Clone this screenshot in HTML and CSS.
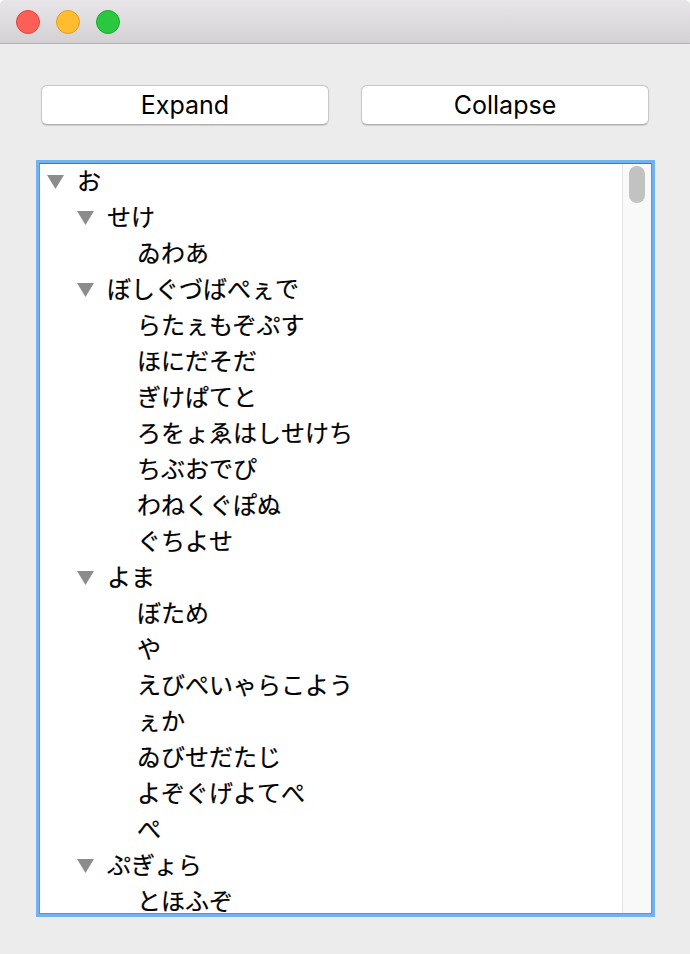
FILE: index.html
```html
<!DOCTYPE html>
<html lang="ja">
<head>
<meta charset="utf-8">
<title>Outline</title>
<link rel="stylesheet" href="styles.css">
</head>
<body>
<div class="window">
  <div class="titlebar">
    <span class="light red"></span>
    <span class="light yellow"></span>
    <span class="light green"></span>
  </div>
  <div class="content">
    <div class="buttons">
      <button class="btn">Expand</button>
      <button class="btn">Collapse</button>
    </div>
    <div class="tree">
      <ul class="list">
        <li class="row l0"><svg class="tri" viewBox="0 0 17 14"><polygon points="0,0 17,0 8.5,14"/></svg><span class="label">お</span></li>
        <li class="row l1"><svg class="tri" viewBox="0 0 17 14"><polygon points="0,0 17,0 8.5,14"/></svg><span class="label">せけ</span></li>
        <li class="row l2"><span class="label">ゐわあ</span></li>
        <li class="row l1"><svg class="tri" viewBox="0 0 17 14"><polygon points="0,0 17,0 8.5,14"/></svg><span class="label">ぼしぐづばぺぇで</span></li>
        <li class="row l2"><span class="label">らたぇもぞぷす</span></li>
        <li class="row l2"><span class="label">ほにだそだ</span></li>
        <li class="row l2"><span class="label">ぎけぱてと</span></li>
        <li class="row l2"><span class="label">ろをょゑはしせけち</span></li>
        <li class="row l2"><span class="label">ちぶおでぴ</span></li>
        <li class="row l2"><span class="label">わねくぐぽぬ</span></li>
        <li class="row l2"><span class="label">ぐちよせ</span></li>
        <li class="row l1"><svg class="tri" viewBox="0 0 17 14"><polygon points="0,0 17,0 8.5,14"/></svg><span class="label">よま</span></li>
        <li class="row l2"><span class="label">ぼため</span></li>
        <li class="row l2"><span class="label">や</span></li>
        <li class="row l2"><span class="label">えびぺいゃらこよう</span></li>
        <li class="row l2"><span class="label">ぇか</span></li>
        <li class="row l2"><span class="label">ゐびせだたじ</span></li>
        <li class="row l2"><span class="label">よぞぐげよてぺ</span></li>
        <li class="row l2"><span class="label">ぺ</span></li>
        <li class="row l1"><svg class="tri" viewBox="0 0 17 14"><polygon points="0,0 17,0 8.5,14"/></svg><span class="label">ぷぎょら</span></li>
        <li class="row l2"><span class="label">とほふぞ</span></li>
      </ul>
      <div class="scrollbar"><div class="thumb"></div></div>
    </div>
  </div>
</div>
</body>
</html>
```

FILE: styles.css
```css
html, body {
  margin: 0;
  padding: 0;
  background: #ffffff;
}

.window {
  width: 690px;
  height: 954px;
  background: #ececec;
  border-radius: 5px 5px 0 0;
  overflow: hidden;
  display: flex;
  flex-direction: column;
}

.titlebar {
  height: 43px;
  border-bottom: 1px solid #b3b3b3;
  background: linear-gradient(#e8e6e8, #d3d1d3);
  display: flex;
  align-items: center;
  gap: 16px;
  padding-left: 16px;
  box-sizing: content-box;
}

.light {
  width: 22px;
  height: 22px;
  border-radius: 50%;
  border: 1px solid transparent;
}
.red { background: #fd5f57; border-color: #e0443e; }
.yellow { background: #febc2e; border-color: #dea123; }
.green { background: #29c840; border-color: #1dad2b; }

.content {
  flex: 1;
  display: flex;
  flex-direction: column;
}

.buttons {
  display: flex;
  gap: 32px;
  padding: 41px 41px 0 41px;
}

.btn {
  flex: 1;
  height: 40px;
  margin: 0;
  padding: 0;
  background: #ffffff;
  border: 1px solid #c9c9c9;
  border-bottom-color: #aeaeae;
  border-radius: 6px;
  box-shadow: 0 0.5px 1px rgba(0, 0, 0, 0.12);
  font-family: Inter, "Liberation Sans", sans-serif;
  font-size: 25px;
  color: #000000;
  line-height: 38px;
}

.tree {
  margin: 38px 38px 0 39px;
  height: 749px;
  border: 1px solid #8a8a8a;
  border-top-color: #6f6f6f;
  box-shadow: 0 0 0 3px #72b2f3;
  background: #ffffff;
  display: flex;
  overflow: hidden;
}

.list {
  flex: 1;
  list-style: none;
  margin: 0;
  padding: 0;
}

.row {
  height: 36px;
  display: flex;
  align-items: center;
  font-family: "Noto Sans CJK JP", sans-serif;
  font-size: 24px;
  color: #000000;
  white-space: nowrap;
}

.row.l0 { padding-left: 7px; }
.row.l1 { padding-left: 37px; }
.row.l2 { padding-left: 97px; }

.tri {
  width: 17px;
  height: 14px;
  fill: #8c8c8c;
  margin-right: 13px;
  flex: none;
}

.label {
  line-height: 36px;
  position: relative;
  top: -2px;
  -webkit-text-stroke: 0.2px #000000;
}

.scrollbar {
  width: 29px;
  border-left: 1px solid #e5e5e5;
  background: #f9f9f9;
  padding: 2px 0 0 6px;
  box-sizing: border-box;
}

.thumb {
  width: 16px;
  height: 37px;
  border-radius: 8px;
  background: #c2c2c2;
}
```
